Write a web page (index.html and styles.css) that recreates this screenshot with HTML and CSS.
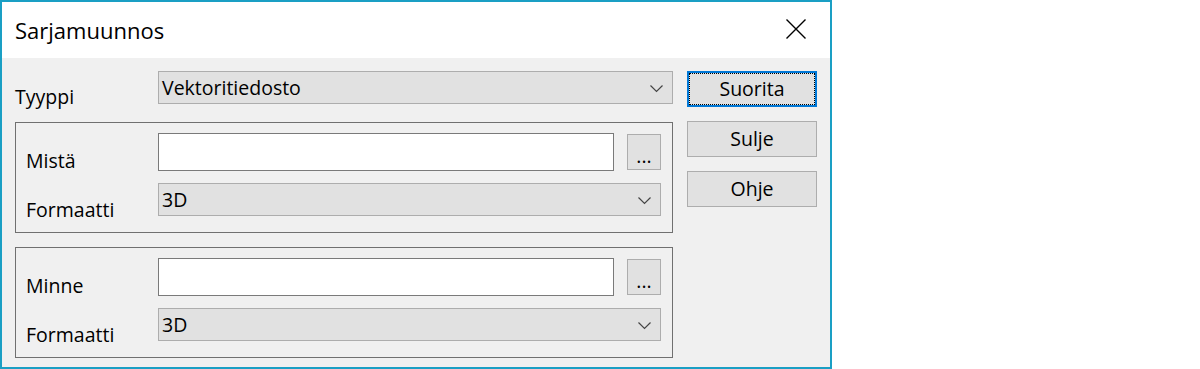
FILE: index.html
```html
<!DOCTYPE html>
<html lang="fi">
<head>
    <meta charset="UTF-8">
    <title>Sarjamuunnos</title>
    <link rel="stylesheet" href="styles.css">
</head>
<body>

    <div class="window">
        <div class="titlebar">
            <span class="title">Sarjamuunnos</span>
            <svg class="close" width="20" height="20" viewBox="0 0 20 20">
                <path d="M0.5 0.5 L19.5 19.5 M19.5 0.5 L0.5 19.5" stroke="#000" stroke-width="1.4" fill="none"/>
            </svg>
        </div>

        <div class="content">
            <div class="main">
                <div class="row top-row">
                    <label class="label wide">Tyyppi</label>
                    <div class="combo big">
                        <span>Vektoritiedosto</span>
                        <svg class="chev" width="13" height="8" viewBox="0 0 13 8"><path d="M0.5 0.5 L6.5 6.5 L12.5 0.5" stroke="#444" stroke-width="1.2" fill="none"/></svg>
                    </div>
                </div>

                <div class="group">
                    <div class="row">
                        <label class="label">Mistä</label>
                        <input type="text" class="field">
                        <button type="button" class="browse">...</button>
                    </div>
                    <div class="row row-combo">
                        <label class="label">Formaatti</label>
                        <div class="combo small">
                            <span>3D</span>
                            <svg class="chev" width="13" height="8" viewBox="0 0 13 8"><path d="M0.5 0.5 L6.5 6.5 L12.5 0.5" stroke="#444" stroke-width="1.2" fill="none"/></svg>
                        </div>
                    </div>
                </div>

                <div class="group">
                    <div class="row">
                        <label class="label">Minne</label>
                        <input type="text" class="field">
                        <button type="button" class="browse">...</button>
                    </div>
                    <div class="row row-combo">
                        <label class="label">Formaatti</label>
                        <div class="combo small">
                            <span>3D</span>
                            <svg class="chev" width="13" height="8" viewBox="0 0 13 8"><path d="M0.5 0.5 L6.5 6.5 L12.5 0.5" stroke="#444" stroke-width="1.2" fill="none"/></svg>
                        </div>
                    </div>
                </div>
            </div>

            <div class="buttons">
                <button type="button" class="btn default"><span class="focus">Suorita</span></button>
                <button type="button" class="btn">Sulje</button>
                <button type="button" class="btn">Ohje</button>
            </div>
        </div>
    </div>

</body>
</html>
```

FILE: styles.css
```css
body{
    margin: 0;
    background-color: white;
    font-family: "Open Sans", "Noto Sans", sans-serif;
    color: black;
}

.window{
    box-sizing: border-box;
    width: 832px;
    height: 369px;
    border: 2px solid #1a9fc4;
    background-color: #f0f0f0;
    display: flex;
    flex-direction: column;
}

.titlebar{
    height: 56px;
    background-color: white;
    display: flex;
    align-items: center;
    justify-content: space-between;
    padding: 0 24px 0 13px;
}

.title{
    font-size: 22px;
    margin-top: -1px;
}

.close{
    display: block;
    margin-top: -2px;
}

.content{
    display: flex;
    gap: 14px;
    padding: 13px 13px 0 13px;
}

.main{
    width: 658px;
}

.row{
    display: flex;
    align-items: flex-start;
    height: 38px;
}

.top-row{
    height: 33px;
}

.label{
    font-size: 19.5px;
    line-height: 20px;
    padding-top: 18px;
    width: 132px;
    flex-shrink: 0;
}

.label.wide{
    width: 143px;
    padding-top: 16px;
}

.combo{
    box-sizing: border-box;
    height: 33px;
    border: 1px solid #adadad;
    background-color: #e1e1e1;
    display: flex;
    align-items: center;
    justify-content: space-between;
    padding: 0 9px 0 3px;
    font-size: 19.5px;
}

.combo span{
    margin-top: -1px;
}

.combo.big{
    width: 516px;
}

.combo.small{
    width: 504px;
}

.chev{
    display: block;
    margin-top: 2px;
}

.group{
    box-sizing: border-box;
    height: 111px;
    border: 1px solid #707070;
    margin-top: 18px;
    padding: 10px 11px 0 10px;
}

.group + .group{
    margin-top: 14px;
}

.field{
    box-sizing: border-box;
    width: 456px;
    height: 38px;
    border: 1px solid #7a7a7a;
    background: white;
    margin: 0;
    padding: 0;
    outline: none;
}

.browse{
    box-sizing: border-box;
    width: 34px;
    height: 36px;
    margin: 1px 0 0 13px;
    border: 1px solid #adadad;
    background-color: #e1e1e1;
    font-family: inherit;
    font-size: 19.5px;
    padding: 6px 0 0 0;
    color: black;
}

.row-combo{
    margin-top: 12px;
    height: 33px;
}

.row-combo .label{
    padding-top: 17px;
}

.buttons{
    display: flex;
    flex-direction: column;
    gap: 14px;
    width: 130px;
}

.btn{
    box-sizing: border-box;
    width: 130px;
    height: 36px;
    margin: 0;
    border: 1px solid #adadad;
    background-color: #e1e1e1;
    font-family: inherit;
    font-size: 19.5px;
    color: black;
    padding: 0 0 2px 0;
}

.btn.default{
    border: 2px solid #0078d7;
    padding: 0;
}

.focus{
    box-sizing: border-box;
    display: flex;
    align-items: center;
    justify-content: center;
    height: 100%;
    border: 1px dotted black;
    padding-bottom: 2px;
}
```
